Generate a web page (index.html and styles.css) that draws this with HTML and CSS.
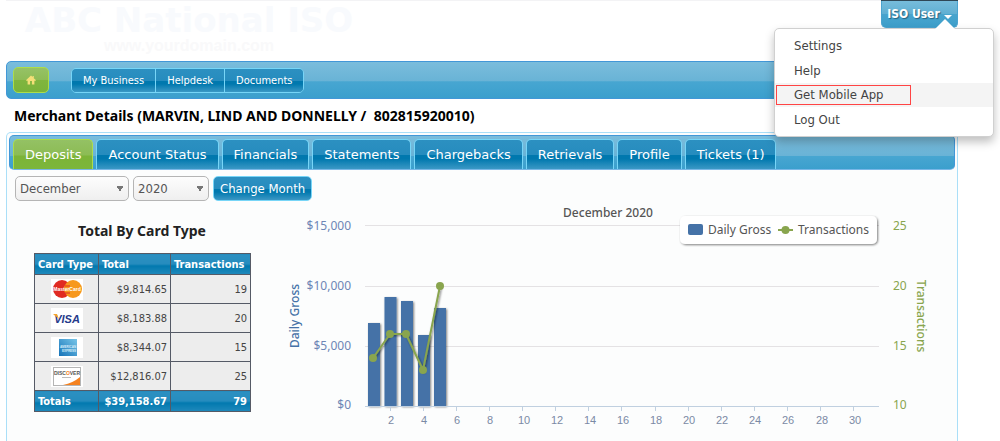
FILE: index.html
```html
<!DOCTYPE html>
<html lang="en">
<head>
  <meta charset="UTF-8" />
  <meta name="viewport" content="width=device-width, initial-scale=1.0" />
  <title>Merchant Details</title>
  <link rel="stylesheet" href="styles.css">
</head>
<body>
  <header class="header">
    <div class="logo">
      <div class="logo-name">ABC National ISO</div>
      <div class="logo-domain">www.yourdomain.com</div>
    </div>
    <div class="user">
      <button class="user-button" type="button">ISO User <span class="caret"></span></button>
      <ul class="user-menu">
        <li><a href="#">Settings</a></li>
        <li><a href="#">Help</a></li>
        <li class="active"><a href="#"><span class="marked">Get Mobile App</span></a></li>
        <li><a href="#">Log Out</a></li>
      </ul>
    </div>
  </header>

  <nav class="navbar">
    <a class="home" href="#" aria-label="Home">
      <svg width="10" height="10" viewBox="0 0 10 10"><path d="M5 0.5L6.600 2V1h1.200v2.200L9.800 5v.8H8.400V9.500H5.900V6H4.100v3.500H1.600V5.800H.2V5z" fill="#f4df78"/></svg>
    </a>
    <div class="nav-group">
      <a href="#">My Business</a>
      <a href="#">Helpdesk</a>
      <a href="#">Documents</a>
    </div>
  </nav>

  <h1>Merchant Details (MARVIN, LIND AND DONNELLY /&nbsp; 802815920010)</h1>

  <main class="panel">
    <div class="tabs">
      <a class="tab selected" href="#">Deposits</a>
      <a class="tab" href="#">Account Status</a>
      <a class="tab" href="#">Financials</a>
      <a class="tab" href="#">Statements</a>
      <a class="tab" href="#">Chargebacks</a>
      <a class="tab" href="#">Retrievals</a>
      <a class="tab" href="#">Profile</a>
      <a class="tab" href="#">Tickets (1)</a>
    </div>

    <form class="filter">
      <select class="month" aria-label="Month"><option>December</option></select>
      <select class="year" aria-label="Year"><option>2020</option></select>
      <button type="button">Change Month</button>
    </form>

    <div class="content">
      <section class="cards">
        <h2>Total By Card Type</h2>
        <table>
          <thead>
            <tr><th class="col-type">Card Type</th><th class="col-total">Total</th><th>Transactions</th></tr>
          </thead>
          <tbody>
            <tr>
              <td class="type">
                <svg class="card" viewBox="0 0 32 21" role="img" aria-label="MasterCard">
                  <circle cx="11" cy="10" r="9" fill="#e02a22"/>
                  <circle cx="22" cy="10" r="9" fill="#f7981d"/>
                  <path d="M14 7h5M14 14h5" stroke="#e02a22" stroke-width="1"/>
                  <text x="16" y="12" class="mc">MasterCard</text>
                </svg>
              </td>
              <td>$9,814.65</td><td>19</td>
            </tr>
            <tr>
              <td class="type">
                <svg class="card" viewBox="0 0 32 21" role="img" aria-label="Visa">
                  <text x="16" y="15" class="visa">VISA</text>
                  <path d="M2 6h4l2 5z" fill="#f3a32c"/>
                </svg>
              </td>
              <td>$8,183.88</td><td>20</td>
            </tr>
            <tr>
              <td class="type">
                <svg class="card" viewBox="0 0 32 21" role="img" aria-label="American Express">
                  <defs>
                    <linearGradient id="amex" x1="0" y1="1" x2="1" y2="0">
                      <stop offset="0" stop-color="#1673b8"/>
                      <stop offset="1" stop-color="#77c5e8"/>
                    </linearGradient>
                  </defs>
                  <rect x="8" y="2" width="18" height="17" fill="url(#amex)"/>
                  <text x="17" y="11" class="amex">AMERICAN</text>
                  <text x="18" y="15" class="amex">EXPRESS</text>
                </svg>
              </td>
              <td>$8,344.07</td><td>15</td>
            </tr>
            <tr>
              <td class="type">
                <svg class="card" viewBox="0 0 32 21" role="img" aria-label="Discover">
                  <path d="M29 11v8H12q10-2 17-8z" fill="#f58220"/>
                  <rect x="2.500" y="1.500" width="27" height="18" fill="none" stroke="#b5b5b5"/>
                  <text x="16" y="9" class="disc">DISC<tspan fill="#f58220">O</tspan>VER</text>
                  <path d="M11 11.500h9" stroke="#bbb"/>
                </svg>
              </td>
              <td>$12,816.07</td><td>25</td>
            </tr>
          </tbody>
          <tfoot>
            <tr><td>Totals</td><td>$39,158.67</td><td>79</td></tr>
          </tfoot>
        </table>
      </section>

      <svg class="chart" viewBox="0 1 660 235">
        <defs>
          <filter id="shadow" x="-10%" y="-10%" width="130%" height="130%">
            <feDropShadow dx="1" dy="1" stdDeviation="1" flood-color="#000" flood-opacity="0.5"/>
          </filter>
        </defs>
        <text x="328" y="17" class="title">December 2020</text>

        <path class="grid" d="M85 25.500h514M85 86.500h514M85 146.500h514"/>

        <g class="left">
          <text x="71" y="30">$15,000</text>
          <text x="71" y="90">$10,000</text>
          <text x="71" y="150">$5,000</text>
          <text x="71" y="209">$0</text>
        </g>
        <g class="right">
          <text x="613" y="30">25</text>
          <text x="613" y="90">20</text>
          <text x="613" y="150">15</text>
          <text x="613" y="209">10</text>
        </g>
        <text class="axis-title gross" transform="translate(19 116) rotate(-90)">Daily Gross</text>
        <text class="axis-title trans" transform="translate(637 116) rotate(90)">Transactions</text>

        <g class="bars" filter="url(#shadow)">
          <rect x="88" y="123" width="12" height="83"/>
          <rect x="104.500" y="97" width="12" height="109"/>
          <rect x="121" y="101" width="12" height="105"/>
          <rect x="138" y="135" width="12" height="71"/>
          <rect x="154" y="108" width="12" height="98"/>
        </g>

        <path class="axis" d="M85 206.500h514M110.500 207v4M143.500 207v4M176.500 207v4M209.500 207v4M242.500 207v4M275.500 207v4M308.500 207v4M341.500 207v4M375.500 207v4M408.500 207v4M441.500 207v4M474.500 207v4M507.500 207v4M540.500 207v4M573.500 207v4"/>
        <g class="days">
          <text x="111" y="224">2</text>
          <text x="144" y="224">4</text>
          <text x="177" y="224">6</text>
          <text x="210" y="224">8</text>
          <text x="244" y="224">10</text>
          <text x="277" y="224">12</text>
          <text x="310" y="224">14</text>
          <text x="343" y="224">16</text>
          <text x="376" y="224">18</text>
          <text x="409" y="224">20</text>
          <text x="442" y="224">22</text>
          <text x="475" y="224">24</text>
          <text x="508" y="224">26</text>
          <text x="542" y="224">28</text>
          <text x="575" y="224">30</text>
        </g>

        <g filter="url(#shadow)">
          <path class="line" d="M93 158L110 134L126 134L143 170L160 86"/>
        </g>
        <g class="dots">
          <circle cx="93" cy="158" r="4"/>
          <circle cx="110" cy="134" r="4"/>
          <circle cx="126" cy="134" r="4"/>
          <circle cx="143" cy="170" r="4"/>
          <circle cx="160" cy="86" r="4"/>
        </g>

        <rect x="400" y="16" width="197" height="28" rx="5" fill="#fff" filter="url(#shadow)"/>
        <rect x="408" y="24" width="15" height="11" rx="2" fill="#4572a7"/>
        <text x="428" y="34" class="legend">Daily Gross</text>
        <path class="line" d="M498 30h15"/>
        <circle cx="505.500" cy="30" r="4" fill="#89a54e"/>
        <text x="518" y="34" class="legend">Transactions</text>
      </svg>
    </div>
  </main>
</body>
</html>
```
FILE: styles.css
```css
* {
  box-sizing: border-box;
}
body {
  display: flex;
  flex-direction: column;
  min-height: 100vh;
  margin: 0;
  padding: 0 42px 0 6px;
  background-color: #fff;
  color: #222;
  font-family: 'DejaVu Sans Condensed', Tahoma, Verdana, sans-serif;
  font-size: 13px;
}
a {
  color: inherit;
  text-decoration: none;
}
.header {
  display: flex;
  justify-content: space-between;
  align-items: flex-start;
  height: 61px;
  border-top: 1px solid #f3f3f5;
}
.logo {
  width: 366px;
  padding-top: 2px;
  text-align: center;
  font-family: 'Liberation Sans', Arial, sans-serif;
}
.logo-name {
  font-family: 'DejaVu Sans', Verdana, sans-serif;
  font-size: 34px;
  line-height: 34px;
  font-weight: bold;
  color: #f8fafd;
}
.logo-domain {
  font-size: 16px;
  line-height: 18px;
  font-weight: bold;
  color: #f9f9fa;
}

/* user menu */
.user {
  position: relative;
}
.user-button {
  display: flex;
  align-items: center;
  justify-content: center;
  gap: 4px;
  width: 77px;
  height: 27px;
  padding: 0;
  border: 1px solid #4ba3cf;
  border-top: 0;
  border-radius: 0 0 5px 5px;
  background: linear-gradient(#77bcdb, #60afd2 50%, #48a4cd 50%, #3d9fcb);
  box-shadow: 0 -1px #2f4756;
  color: #fff;
  font-family: inherit;
  font-size: 12px;
  font-weight: bold;
  text-shadow: 1px 1px 1px #27627f;
}
.caret {
  margin-top: 5px;
  border: 4px solid transparent;
  border-top-color: #fff;
  border-bottom: 0;
}
.user-menu {
  position: absolute;
  z-index: 2;
  top: 27px;
  right: -36px;
  width: 220px;
  margin: 0;
  padding: 4px 0;
  border: 1px solid #d0d0d0;
  border-radius: 5px;
  background-color: #fff;
  box-shadow: 0 5px 10px rgba(0, 0, 0, 0.25);
  list-style: none;
  color: #444;
  font-size: 13px;
}
.user-menu::before {
  content: "";
  position: absolute;
  top: -10px;
  right: 38px;
  border: 10px solid transparent;
  border-top: 0;
  border-bottom-color: #fff;
}
.user-menu a {
  display: block;
  padding: 0 19px;
  line-height: 25px;
}
.user-menu .active {
  background-color: #f4f4f4;
}
.user-menu .active a {
  padding: 2px 1px;
}
.marked {
  display: block;
  width: 135px;
  padding-left: 17px;
  border: 1px solid #f44;
  line-height: 18px;
}

/* main navigation */
.navbar {
  display: flex;
  align-items: center;
  gap: 22px;
  height: 38px;
  padding: 0 6px;
  border: 1px solid #4297d7;
  border-radius: 5px;
  background: linear-gradient(#7abddc, #69b3d6 52%, #47a6d1 55%, #3b9fcd);
}
.home {
  display: flex;
  align-items: center;
  justify-content: center;
  width: 36px;
  height: 26px;
  border: 1px solid #acdd4a;
  border-radius: 5px;
  background: linear-gradient(#96c266, #8dbc55 50%, #80b53f 50%, #7ab33a);
}
.nav-group {
  display: flex;
  overflow: hidden;
  border: 1px solid #77d5f7;
  border-radius: 5px;
  color: #fff;
  font-size: 11px;
}
.nav-group a,
.filter button,
.tab {
  background: linear-gradient(#2c90c1, #268cbe 50%, #0078ae 53%, #0078ae 65%, #3b98c5);
}
.nav-group a {
  padding: 0 11px;
  line-height: 23px;
}
.nav-group a + a {
  border-left: 1px solid #77d5f7;
}
h1,
h2 {
  font-family: 'Noto Sans', Verdana, sans-serif;
  font-size: 14px;
}
h1 {
  margin: 0;
  padding: 0 8px;
  color: #000;
  line-height: 33px;
}

/* tabbed panel */
.panel {
  flex: 1;
  padding: 2px;
  border: 1px solid #aadff8;
  border-bottom: 0;
  border-radius: 5px 5px 0 0;
  background-color: #fcfdfd;
}
.tabs {
  display: flex;
  gap: 3px;
  padding: 3px 3px 0;
  border: 1px solid #4297d7;
  border-bottom-color: #79b7e7;
  border-radius: 5px;
  background: linear-gradient(#7abddc, #69b3d6 60%, #47a6d1 62%, #3b9fcd);
}
.tab {
  padding: 0 11px;
  border: 1px solid #77d5f7;
  border-bottom: 0;
  border-radius: 5px 5px 0 0;
  color: #fff;
  font-family: 'DejaVu Sans', Verdana, sans-serif;
  font-size: 13px;
  line-height: 29px;
}
.tab.selected {
  border-color: #acdd4a;
  background: linear-gradient(#94c164, #8cbc54 52%, #7cb437 55%, #7cb63c);
}
.filter {
  display: flex;
  gap: 4px;
  padding: 6px 6px 0;
}
.filter select,
.filter button {
  height: 25px;
  border-radius: 5px;
  font-family: inherit;
  font-size: 13px;
}
/* drop-down arrow over the select background */
.filter select {
  padding: 0 4px;
  border: 1px solid #b5b5b5;
  appearance: none;
  background:
    conic-gradient(from -30deg at 50% 100%, #777 60deg, transparent 60deg) right 5px center / 6px 6px no-repeat,
    linear-gradient(#fdfdfd, #efefef);
  color: #555;
}
.month {
  width: 114px;
}
.year {
  width: 76px;
}
.filter button {
  padding: 0 6px;
  border: 1px solid #77d5f7;
  color: #fff;
}
.content {
  display: flex;
  padding-right: 15px;
}
.cards {
  flex: none;
  width: 271px;
  padding: 20px 0 0 25px;
}
h2 {
  width: 216px;
  margin: 0 0 12px;
  text-align: center;
  line-height: 20px;
}
table {
  width: 217px;
  table-layout: fixed;
  border-collapse: collapse;
  background-color: #ededed;
  color: #444;
  font-size: 11px;
}
.col-type {
  width: 64px;
}
.col-total {
  width: 72px;
}
th,
td {
  height: 29px;
  padding: 0 3px;
  border: 1px solid #555a66;
  text-align: right;
}
th,
tfoot td {
  height: 21px;
  background: linear-gradient(#2c90c1, #268cbe 50%, #0078ae 55%, #2089bc);
  color: #fff;
  font-weight: bold;
}
th,
tfoot td:first-child {
  text-align: left;
}
.type {
  text-align: center;
}
.card {
  display: block;
  width: 32px;
  height: 21px;
  margin: auto;
  background-color: #fff;
  font-family: 'Liberation Sans', Arial, sans-serif;
  font-weight: bold;
  text-anchor: middle;
}
.mc {
  fill: #fff;
  font-size: 5px;
}
.visa {
  fill: #263a8b;
  font-size: 11px;
  font-style: italic;
}
.amex {
  fill: #d8eefa;
  font-size: 3px;
}
.disc {
  fill: #555;
  font-size: 5px;
}

/* deposits chart */
.chart {
  flex: 1;
  min-width: 0;
  height: auto;
  font-family: 'Noto Sans', sans-serif;
  font-size: 12px;
}
.title {
  fill: #555;
  font-weight: 500;
  text-anchor: middle;
}
.grid {
  stroke: #e4e2e4;
}
.axis {
  fill: none;
  stroke: #c0d0e0;
}
.left {
  fill: #6d86b5;
  text-anchor: end;
}
.right {
  fill: #89a54e;
}
.axis-title {
  text-anchor: middle;
  font-weight: 500;
}
.gross {
  fill: #4572a7;
}
.trans {
  fill: #89a54e;
}
.bars {
  fill: #4572a7;
}
.days {
  fill: #7b8aa5;
  font-family: 'Liberation Sans', Arial, sans-serif;
  font-size: 11px;
  text-anchor: middle;
}
.line {
  fill: none;
  stroke: #89a54e;
  stroke-width: 2;
}
.dots {
  fill: #89a54e;
}
.legend {
  fill: #555;
}
```
